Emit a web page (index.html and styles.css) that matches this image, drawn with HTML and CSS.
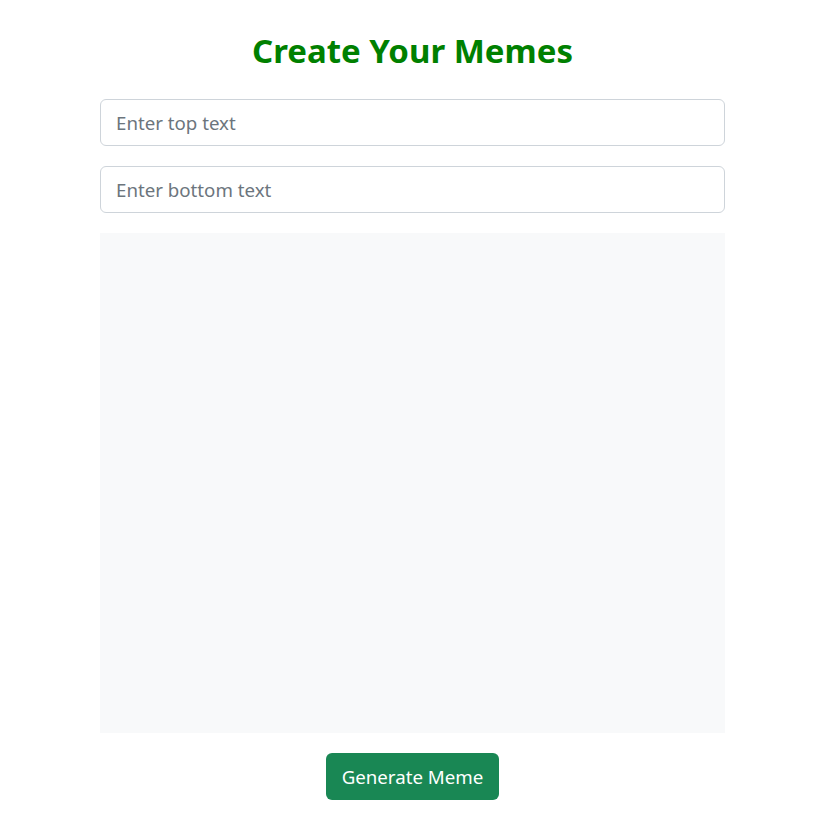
FILE: index.html
```html
<!DOCTYPE html>
<html lang="en">
<head>
<meta charset="utf-8">
<title>Meme Generator</title>
<link rel="stylesheet" href="styles.css">
</head>
<body>
<main class="app">
  <h1 class="title">Create Your Memes</h1>
  <input class="field" type="text" placeholder="Enter top text">
  <input class="field" type="text" placeholder="Enter bottom text">
  <div class="canvas"></div>
  <button class="btn" type="button">Generate Meme</button>
</main>
</body>
</html>
```

FILE: styles.css
```css
html, body {
  margin: 0;
  padding: 0;
  background: #ffffff;
}
body {
  padding-right: 2px;
  font-family: "Noto Sans", "Open Sans", sans-serif;
  color: #212529;
}
.app {
  width: 625px;
  margin: 0 auto;
  padding-top: 28px;
  display: flex;
  flex-direction: column;
  align-items: stretch;
  gap: 20px;
}
.title {
  margin: 0 0 5px;
  text-align: center;
  color: #008000;
  font-size: 33px;
  font-weight: 700;
  line-height: 46px;
}
.field {
  box-sizing: border-box;
  height: 47px;
  width: 100%;
  margin: 0;
  padding: 0 15px;
  border: 1px solid #ced4da;
  border-radius: 6px;
  font-family: inherit;
  font-size: 18.7px;
  color: #212529;
  background: #fff;
  outline: none;
}
.field::placeholder {
  color: #6c757d;
}
.canvas {
  height: 500px;
  background: #f8f9fa;
}
.btn {
  align-self: center;
  box-sizing: border-box;
  height: 47px;
  padding: 0 16px;
  border: 0;
  border-radius: 6px;
  background: #198754;
  color: #fff;
  font-family: inherit;
  font-size: 18.7px;
  cursor: pointer;
}
```
